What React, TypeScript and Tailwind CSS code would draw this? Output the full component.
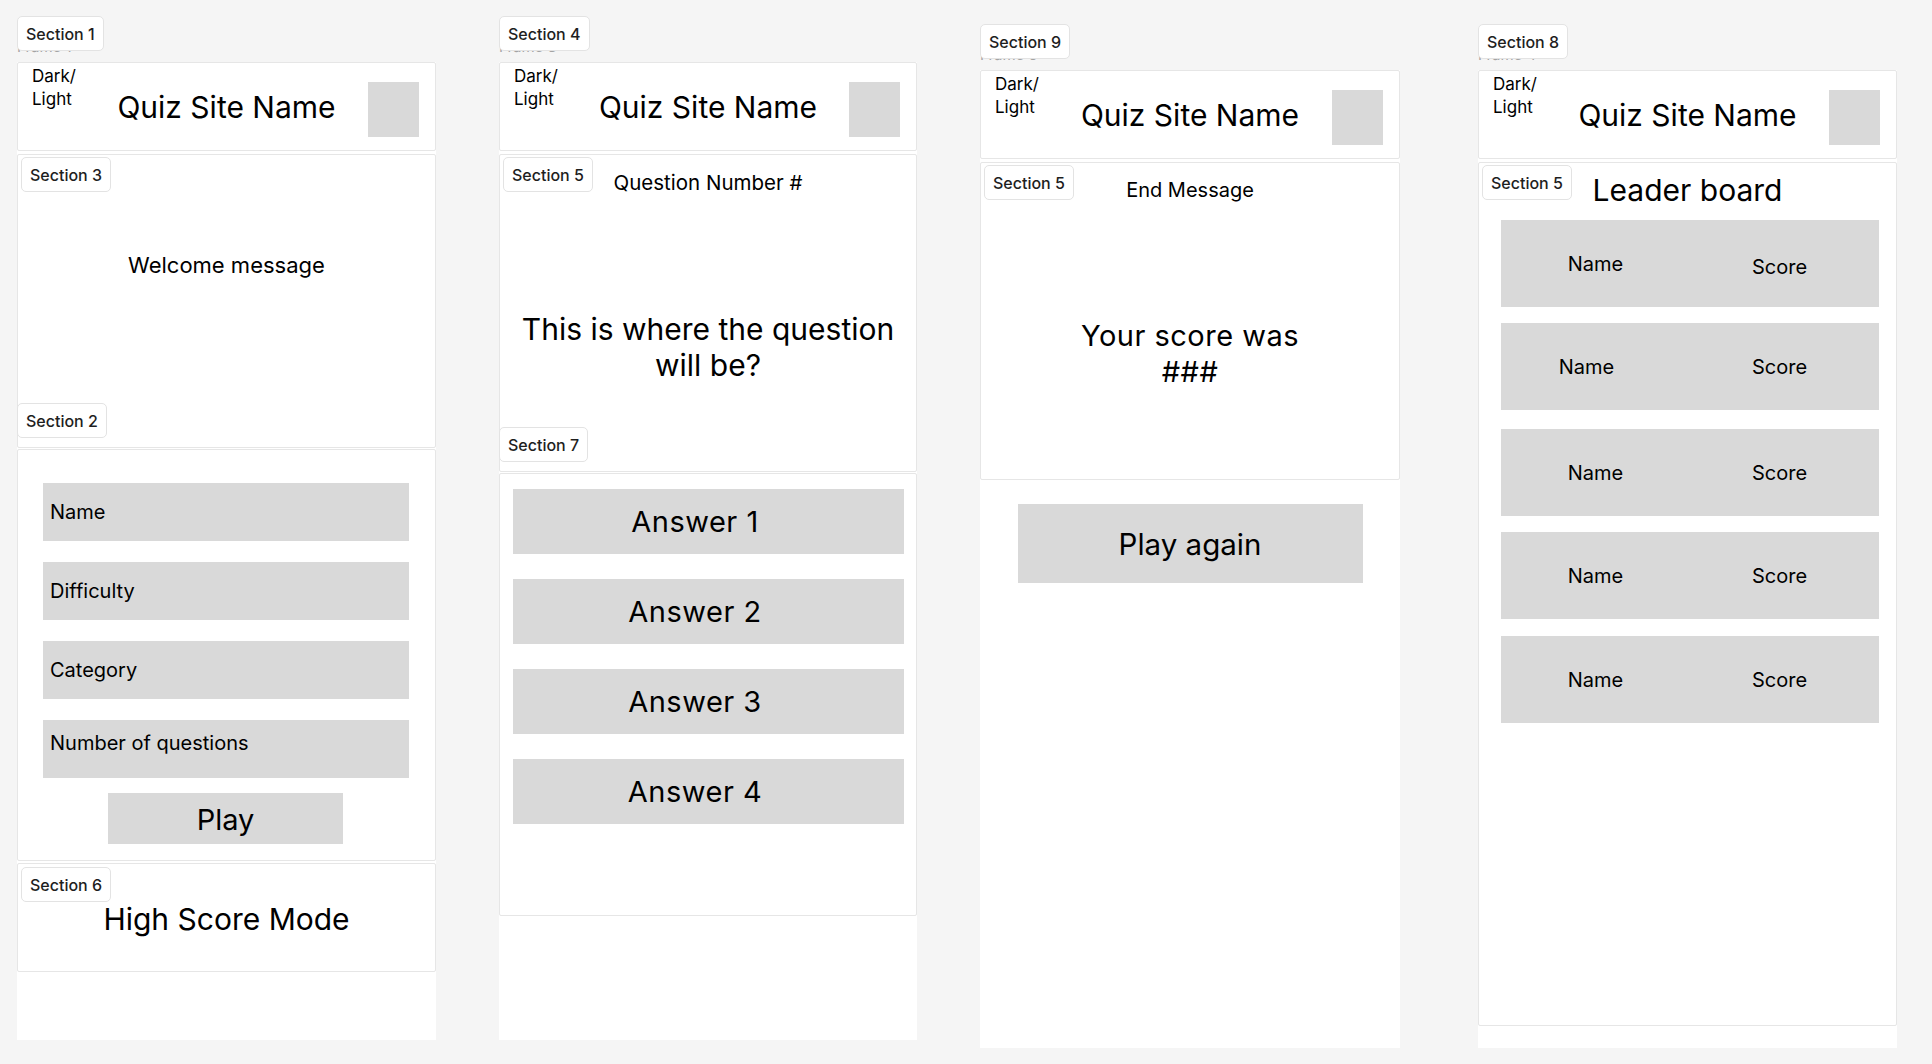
import type { ReactNode } from 'react'

function Tag({ children, className = '' }: { children: ReactNode; className?: string }) {
  return (
    <span
      className={`inline-flex h-[35px] items-center rounded-[5px] border border-[#e3e3e3] bg-white px-[8px] text-[16px] font-medium leading-none text-[#1e1e1e] ${className}`}
    >
      {children}
    </span>
  )
}

function SiteHeader() {
  return (
    <div className="grid h-[89px] shrink-0 grid-cols-[1fr_auto_1fr] rounded-[2px] border border-[#e6e6e6]">
      <div className="self-start pl-[14px] pt-[2px] text-[17px] leading-[23px]">
        Dark/
        <br />
        Light
      </div>
      <div className="self-center text-[30px] leading-[36px]">Quiz Site Name</div>
      <div className="mr-[16px] mt-[19px] h-[55px] w-[51px] self-start justify-self-end bg-[#d9d9d9]" />
    </div>
  )
}

function Column({
  frame,
  section,
  className,
  children
}: {
  frame: string
  section: string
  className: string
  children: ReactNode
}) {
  return (
    <div className={`shrink-0 ${className}`}>
      <div className="relative h-[46px]">
        <span className="absolute left-0 top-[22px] text-[15px] leading-[18px] text-[#a3a3a3]">{frame}</span>
        <Tag className="relative">{section}</Tag>
      </div>
      <div className="flex h-[978px] flex-col bg-white">
        <SiteHeader />
        {children}
      </div>
    </div>
  )
}

const fields = [
  { label: 'Name', align: 'items-center' },
  { label: 'Difficulty', align: 'items-center' },
  { label: 'Category', align: 'items-center' },
  { label: 'Number of questions', align: 'items-start pt-[11px]' }
]

const answers = ['Answer 1', 'Answer 2', 'Answer 3', 'Answer 4']

const scores = [
  { row: '', name: '', score: 'pt-[6px]' },
  { row: 'mt-[16px]', name: 'pr-[18px]', score: '' },
  { row: 'mt-[19px]', name: '', score: '' },
  { row: 'mt-[16px]', name: '', score: '' },
  { row: 'mt-[17px]', name: '', score: '' }
]

export default function App() {
  return (
    <div className="flex h-[1064px] w-[1932px] items-start overflow-hidden bg-[#f5f5f5] font-[Inter,sans-serif] text-black">
      {/* start screen */}
      <Column frame="Frame 1" section="Section 1" className="ml-[17px] mt-[16px] w-[419px]">
        <div className="relative mt-[3px] h-[294px] rounded-[2px] border border-[#e6e6e6] pt-[96px] text-center text-[22px] leading-[28px]">
          <Tag className="absolute left-[3px] top-[2px]">Section 3</Tag>
          Welcome message
        </div>
        <div className="relative mt-[1px] flex h-[412px] flex-col rounded-[2px] border border-[#e6e6e6] pl-[25px] pt-[33px]">
          <Tag className="absolute -left-px -top-[47px]">Section 2</Tag>
          <div className="flex flex-col gap-[21px]">
            {fields.map((f) => (
              <div key={f.label} className={`flex h-[58px] w-[366px] bg-[#d9d9d9] pl-[7px] text-[20px] leading-[24px] ${f.align}`}>
                {f.label}
              </div>
            ))}
          </div>
          <div className="ml-[65px] mt-[15px] flex h-[51px] w-[235px] items-center justify-center bg-[#d9d9d9] pt-[3px] text-[29px] leading-[36px]">
            Play
          </div>
        </div>
        <div className="relative mt-[2px] h-[109px] rounded-[2px] border border-[#e6e6e6] pt-[37px] text-center text-[30px] leading-[36px]">
          <Tag className="absolute left-[3px] top-[3px]">Section 6</Tag>
          High Score Mode
        </div>
      </Column>

      {/* question screen */}
      <Column frame="Frame 3" section="Section 4" className="ml-[63px] mt-[16px] w-[418px]">
        <div className="relative mt-[3px] flex h-[318px] flex-col items-center rounded-[2px] border border-[#e6e6e6] pt-[16px] text-center">
          <Tag className="absolute left-[3px] top-[2px]">Section 5</Tag>
          <div className="text-[20.5px] leading-[24px]">Question Number #</div>
          <div className="mt-[116px] text-[30px] leading-[36px]">
            This is where the question
            <br />
            will be?
          </div>
        </div>
        <div className="relative mt-[1px] flex h-[443px] flex-col gap-[25px] rounded-[2px] border border-[#e6e6e6] pl-[13px] pt-[15px]">
          <Tag className="absolute -left-px -top-[47px]">Section 7</Tag>
          {answers.map((a) => (
            <div key={a} className="flex h-[65px] w-[391px] items-center justify-center bg-[#d9d9d9] pr-[27px] text-[29px] leading-[36px] tracking-[0.5px]">
              {a}
            </div>
          ))}
        </div>
      </Column>

      {/* end screen */}
      <Column frame="Frame 5" section="Section 9" className="ml-[63px] mt-[24px] w-[420px]">
        <div className="relative mt-[3px] flex h-[318px] flex-col items-center rounded-[2px] border border-[#e6e6e6] pt-[15px] text-center">
          <Tag className="absolute left-[3px] top-[2px]">Section 5</Tag>
          <div className="text-[20px] leading-[24px]">End Message</div>
          <div className="mt-[116px] text-[29px] leading-[36px] tracking-[0.5px]">
            Your score was
            <br />
            ###
          </div>
        </div>
        <div className="mt-[24px] flex h-[79px] w-[345px] items-center justify-center self-center bg-[#d9d9d9] text-[29.5px] leading-[36px]">
          Play again
        </div>
      </Column>

      {/* leader board */}
      <Column frame="Frame 4" section="Section 8" className="ml-[78px] mt-[24px] w-[419px]">
        <div className="relative mt-[3px] flex h-[864px] flex-col rounded-[2px] border border-[#e6e6e6] pt-[9px]">
          <Tag className="absolute left-[3px] top-[2px]">Section 5</Tag>
          <div className="text-center text-[30px] leading-[36px]">Leader board</div>
          <div className="mt-[12px] flex flex-col pl-[22px]">
            {scores.map((s, i) => (
              <div key={i} className={`grid h-[87px] w-[378px] grid-cols-2 items-center bg-[#d9d9d9] text-center text-[20px] leading-[24px] ${s.row}`}>
                <span className={s.name}>Name</span>
                <span className={`pr-[10px] ${s.score}`}>Score</span>
              </div>
            ))}
          </div>
        </div>
      </Column>
    </div>
  )
}
